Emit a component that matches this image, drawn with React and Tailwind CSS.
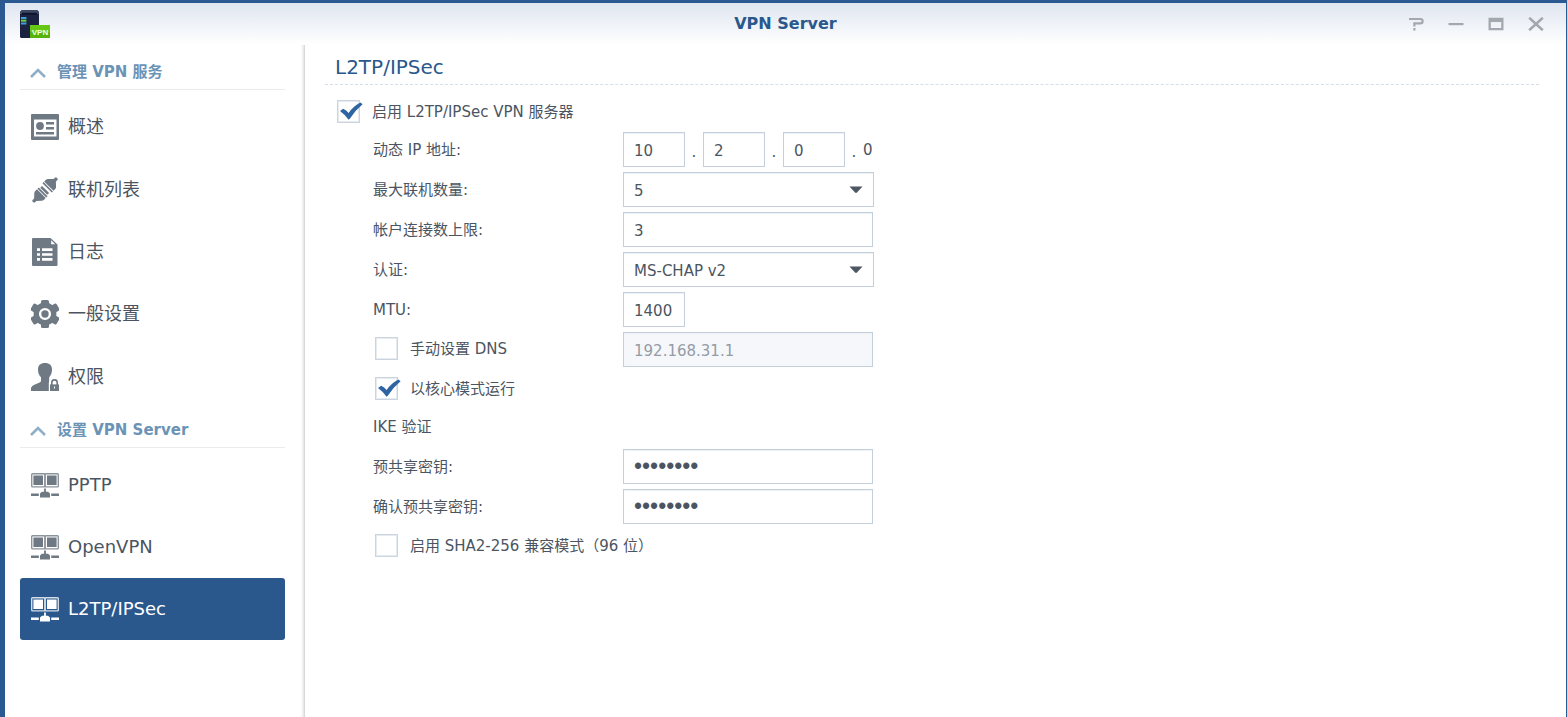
import { useState } from 'react'

function OverviewIcon() {
  return (
    <svg width="28" height="26" viewBox="0 0 28 26" fill="currentColor" aria-hidden="true">
      <path fillRule="evenodd" d="M1 0h26a1 1 0 0 1 1 1v24a1 1 0 0 1-1 1H1a1 1 0 0 1-1-1V1a1 1 0 0 1 1-1zM3 5.5v17h22.5v-17z" />
      <circle cx="9" cy="12" r="3.9" />
      <path d="M15 8h8v2.4h-8zM15 13h8v2.4h-8zM5 18h18v2.4H5z" />
    </svg>
  )
}

function ConnectionIcon() {
  return (
    <svg width="28" height="28" viewBox="0 0 28 28" fill="currentColor" aria-hidden="true">
      <g transform="translate(14 14) rotate(-45)">
        <rect x="-17" y="-1.7" width="4" height="3.4" rx="1.2" />
        <path d="M-14-1.4L-10-5.2Q-9-6.2-7.6-6.2H-5.2V6.2H-7.6Q-9 6.2-10 5.2L-14 1.4z" />
        <path d="M-4.4-6.2h1.8V6.2h-1.8zM-1.8-5h2.6V5h-2.6z" />
        <path d="M3-6.6h1.6V6.6H3z" />
        <path d="M5.4-6.6H7.6Q9-6.6 10-5.6L14-1.4V1.4L10 5.6Q9 6.6 7.6 6.6H5.4z" />
        <rect x="13" y="-1.7" width="4" height="3.4" rx="1.2" />
      </g>
    </svg>
  )
}

function LogIcon() {
  return (
    <svg width="28" height="28" viewBox="0 0 28 28" fill="currentColor" aria-hidden="true">
      <path d="M2 0h17.5L26.5 6.5V27a1 1 0 0 1-1 1H2a1 1 0 0 1-1-1V1a1 1 0 0 1 1-1z" />
      <path d="M20.2 2.2V6.2H24.2z" fill="#fff" />
      <path d="M6 10.3h3v2.6H6zM11 10.3h10.5v2.6H11zM6 15.2h3v2.6H6zM11 15.2h10.5v2.6H11zM6 20.1h3v2.6H6zM11 20.1h10.5v2.6H11z" fill="#fff" />
    </svg>
  )
}

function GearIcon() {
  return (
    <svg width="28" height="28" viewBox="0 0 28 28" fill="currentColor" aria-hidden="true">
      <circle cx="14" cy="14" r="11.4" />
      <rect x="10" y="0" width="8" height="28" rx="1.6" />
      <rect x="10" y="-1" width="8" height="30" rx="1.6" transform="rotate(60 14 14)" />
      <rect x="10" y="-1" width="8" height="30" rx="1.6" transform="rotate(120 14 14)" />
      <circle cx="14" cy="14" r="4.9" fill="currentColor" stroke="#fff" strokeWidth="2.4" />
    </svg>
  )
}

function PrivilegeIcon() {
  return (
    <svg width="28" height="28" viewBox="0 0 28 28" fill="currentColor" aria-hidden="true">
      <path d="M14 0C18.6 0 21 2.4 21 6.4C21 10.4 19.6 12.6 18.2 14.2V16.4L17.8 20.6V28H0V25.6C0 23.4 1.6 22.4 4 21.4L8.6 19.4C9.8 18.8 10 18.4 10 17.4V14.2C8.4 12.6 7 10.4 7 6.4C7 2.4 9.4 0 14 0z" />
      <path d="M19 21.4h9V28h-9z" />
      <path d="M20.8 22v-2.4a2.7 2.7 0 0 1 5.4 0V22" fill="none" stroke="currentColor" strokeWidth="1.6" />
      <path d="M23 23.6h1v2h-1z" fill="#fff" />
    </svg>
  )
}

function NetworkIcon() {
  return (
    <svg width="28" height="25" viewBox="0 0 28 25" fill="currentColor" aria-hidden="true">
      <g fill="none" stroke="currentColor" strokeWidth="1.4" opacity="0.8">
        <rect x="0.7" y="0.7" width="13.2" height="13.2" rx="0.8" />
        <rect x="14.1" y="0.7" width="13.2" height="13.2" rx="0.8" />
      </g>
      <path d="M2.4 2.4h9.6v9.6H2.4zM16 2.4h9.6v9.6H16z" />
      <path d="M13.1 15.6h1.8v3.2h2.2l1.9 1.6v4H9v-4l1.9-1.6h2.2z" />
      <path d="M0 20.4h7.8v2.6H0zM20.2 20.4H28v2.6h-7.8z" />
    </svg>
  )
}

function AppLogo() {
  return (
    <svg width="30" height="30" viewBox="0 0 30 30" aria-hidden="true" className="-ml-[7px]">
      <path d="M2 1h15l2 2v26H1l-1-1V3z" fill="#1c2340" />
      <path d="M2 1h15l2 2v2H0V3z" fill="#3b4763" />
      <path d="M2 3.8h15v1.8H2z" fill="#0d1228" />
      <path d="M1 8h5.4v2H1zM1 13.4h5.4v2H1z" fill="#3f9fd6" />
      <path d="M1 10.7h5.4v2H1z" fill="#6fd43c" />
      <rect x="10" y="16" width="20" height="13" fill="#55b30c" />
      <rect x="10" y="16" width="20" height="7" fill="#66c714" />
      <text x="20" y="25.8" fontSize="8" fontWeight="700" fontFamily="'Liberation Sans', sans-serif" textAnchor="middle" fill="#f2ffe6">VPN</text>
    </svg>
  )
}

const GROUPS = [
  {
    title: '管理 VPN 服务',
    listHeight: 'h-[312px]',
    items: [
      { label: '概述', Icon: OverviewIcon },
      { label: '联机列表', Icon: ConnectionIcon },
      { label: '日志', Icon: LogIcon },
      { label: '一般设置', Icon: GearIcon },
      { label: '权限', Icon: PrivilegeIcon },
    ],
  },
  {
    title: '设置 VPN Server',
    listHeight: 'h-[186px]',
    items: [
      { label: 'PPTP', Icon: NetworkIcon },
      { label: 'OpenVPN', Icon: NetworkIcon },
      { label: 'L2TP/IPSec', Icon: NetworkIcon },
    ],
  },
]

const FIELD = 'h-[35px] border border-[#c3cfdc] bg-white px-[10px] text-[#4b5561] shadow-[inset_0_1px_1px_#eef1f4] outline-none disabled:bg-[#f5f7fa] disabled:text-[#949ca6]'
const TEXT_FIELD = `${FIELD} pt-[2px] text-[15px]`
// larger face so the mask dots come out bold and evenly set
const PASSWORD_FIELD = `${FIELD} w-[250px] font-['Liberation_Sans',sans-serif] text-[23px]`

function Sidebar({ active, onSelect }) {
  return (
    <nav className="w-[300px] shrink-0 border-r border-[#d6d8da] pl-[15px] pr-[19px] pt-[5px] shadow-[inset_-4px_0_3px_-3px_#dcdcdc]">
      {GROUPS.map((group) => (
        <section key={group.title}>
          <h2 className="border-b border-[#e9ebed]">
            <button className="flex h-[39px] w-full items-center gap-[11px] pl-[10px] pt-1 text-[15px] font-bold leading-5 text-[#6b93b6]">
              <svg width="16" height="10" viewBox="0 0 16 10" fill="none" stroke="#8fafc8" strokeWidth="2.6" className="mt-[2px]" aria-hidden="true">
                <path d="M1 9L8 2L15 9" />
              </svg>
              {group.title}
            </button>
          </h2>
          <ul className={`mt-[6px] flex flex-col ${group.listHeight}`}>
            {group.items.map(({ label, Icon }) => (
              <li key={label} className="flex-1">
                <button
                  onClick={() => onSelect(label)}
                  className={`flex h-full w-full items-center gap-[9px] rounded-[3px] pl-[11px] text-[18px] leading-6 ${active === label ? 'bg-[#2a588c] text-white' : 'text-[#6f7983]'}`}
                >
                  <Icon />
                  <span className={active === label ? 'text-white' : 'text-[#4b5561]'}>{label}</span>
                </button>
              </li>
            ))}
          </ul>
        </section>
      ))}
    </nav>
  )
}

function Checkbox({ id, checked, onChange, children }) {
  return (
    <div className="flex items-center gap-3">
      <span className="relative flex">
        <input
          id={id}
          type="checkbox"
          checked={checked}
          onChange={(e) => onChange(e.target.checked)}
          className="h-[23px] w-[23px] appearance-none border border-[#ccd5df] bg-white shadow-[inset_0_0_0_1px_#e6ebf0]"
        />
        {checked && (
          <svg width="26" height="23" viewBox="0 0 26 23" className="pointer-events-none absolute left-0 top-0" aria-hidden="true">
            <path d="M3 11L6.2 8.8Q9.4 10.4 11.6 13Q16 6.6 23.4 2.6L25.6 4.2Q18 10.4 13 18.6L11.6 19.8Q8 14.6 3 11z" fill="#2f64a3" />
          </svg>
        )}
      </span>
      <label htmlFor={id}>{children}</label>
    </div>
  )
}

function Row({ label, htmlFor, children }) {
  return (
    <div className="flex h-[35px] items-center">
      <label htmlFor={htmlFor} className="w-[250px] shrink-0">{label}</label>
      {children}
    </div>
  )
}

function Select({ id, options, defaultValue }) {
  return (
    <div className="relative flex w-[251px] items-center">
      <select id={id} defaultValue={defaultValue} className={`w-full appearance-none ${TEXT_FIELD}`}>
        {options.map((o) => <option key={o}>{o}</option>)}
      </select>
      <svg width="14" height="8" viewBox="0 0 14 8" className="pointer-events-none absolute right-[11px]" aria-hidden="true">
        <path d="M0.5 0.5h13L8 6.6Q7 7.4 6 6.6z" fill="#4d5763" />
      </svg>
    </div>
  )
}

function L2tpForm() {
  const [enabled, setEnabled] = useState(true)
  const [manualDns, setManualDns] = useState(false)
  const [kernelMode, setKernelMode] = useState(true)
  const [sha256, setSha256] = useState(false)

  return (
    <form className="pl-3 pt-[9px]">
      <div className="flex h-[35px] items-center">
        <Checkbox id="enable" checked={enabled} onChange={setEnabled}>启用 L2TP/IPSec VPN 服务器</Checkbox>
      </div>

      <div className="mt-[3px] flex flex-col gap-[5px] pl-9">
        <Row label="动态 IP 地址:" htmlFor="ip-1">
          {['10', '2', '0'].map((octet, i) => (
            <div key={i} className="flex items-center">
              <input id={`ip-${i + 1}`} aria-label={`IP ${i + 1}`} defaultValue={octet} className={`w-[62px] ${TEXT_FIELD}`} />
              <span className="w-[18px] pt-1 text-center">.</span>
            </div>
          ))}
          <span>0</span>
        </Row>
        <Row label="最大联机数量:" htmlFor="max-conn">
          <Select id="max-conn" options={['5', '10', '15', '20']} defaultValue="5" />
        </Row>
        <Row label="帐户连接数上限:" htmlFor="max-account">
          <input id="max-account" defaultValue="3" className={`w-[250px] ${TEXT_FIELD}`} />
        </Row>
        <Row label="认证:" htmlFor="auth">
          <Select id="auth" options={['PAP', 'MS-CHAP v2']} defaultValue="MS-CHAP v2" />
        </Row>
        <Row label="MTU:" htmlFor="mtu">
          <input id="mtu" defaultValue="1400" className={`w-[62px] ${TEXT_FIELD}`} />
        </Row>
        <div className="flex h-[35px] items-center">
          <div className="w-[250px] shrink-0 pb-[2px] pl-[2px]">
            <Checkbox id="dns" checked={manualDns} onChange={setManualDns}>手动设置 DNS</Checkbox>
          </div>
          <input aria-label="DNS" disabled={!manualDns} defaultValue="192.168.31.1" className={`w-[250px] ${TEXT_FIELD}`} />
        </div>
        <div className="flex h-[35px] items-center pb-[2px] pl-[2px]">
          <Checkbox id="kernel" checked={kernelMode} onChange={setKernelMode}>以核心模式运行</Checkbox>
        </div>
      </div>

      <fieldset className="mt-[2px] flex flex-col gap-[5px] pl-9">
        <div className="flex h-[35px] items-center">IKE 验证</div>
        <Row label="预共享密钥:" htmlFor="psk">
          <input id="psk" type="password" defaultValue="password" className={PASSWORD_FIELD} />
        </Row>
        <Row label="确认预共享密钥:" htmlFor="psk-confirm">
          <input id="psk-confirm" type="password" defaultValue="password" className={PASSWORD_FIELD} />
        </Row>
        <div className="flex h-[35px] items-center pb-[2px] pl-[2px]">
          <Checkbox id="sha" checked={sha256} onChange={setSha256}>启用 SHA2-256 兼容模式（96 位）</Checkbox>
        </div>
      </fieldset>
    </form>
  )
}

export default function App() {
  const [active, setActive] = useState('L2TP/IPSec')

  return (
    <div className="flex min-h-screen bg-[#2b5a93] pl-[5px] pr-px pt-[3px] font-['DejaVu_Sans','Noto_Sans_CJK_SC',sans-serif] text-[15px] leading-5 text-[#4b5561]">
      <div className="flex flex-1 flex-col bg-white">
        {/* Title bar */}
        <header className="grid h-[42px] shrink-0 grid-cols-[1fr_auto_1fr] items-center bg-linear-to-b from-[#dfe6f0] to-white px-[22px]">
          <AppLogo />
          <h1 className="text-[16px] font-bold text-[#2a588c]">VPN Server</h1>
          <div className="flex justify-end gap-6 text-[#a3a8b0]">
            <button aria-label="Help">
              <svg width="16" height="14" viewBox="0 0 16 14" fill="none" stroke="currentColor" strokeWidth="2.2" aria-hidden="true">
                <path d="M1 2h11.4q2.2 0 2.2 2.2t-2.2 2.2H6.4V9.4M6.4 11v2.4" />
              </svg>
            </button>
            <button aria-label="Minimize">
              <svg width="16" height="14" viewBox="0 0 16 14" fill="currentColor" aria-hidden="true">
                <path d="M0.5 6h15v2.2h-15z" />
              </svg>
            </button>
            <button aria-label="Maximize">
              <svg width="16" height="14" viewBox="0 0 16 14" fill="currentColor" aria-hidden="true">
                <path fillRule="evenodd" d="M0.5 0.8h15v12.4h-15zM2.8 5v6h10.4V5z" />
              </svg>
            </button>
            <button aria-label="Close">
              <svg width="16" height="14" viewBox="0 0 16 14" fill="none" stroke="currentColor" strokeWidth="2.6" aria-hidden="true">
                <path d="M1.2 0.8L14.8 13.2M14.8 0.8L1.2 13.2" />
              </svg>
            </button>
          </div>
        </header>

        <div className="flex flex-1">
          <Sidebar active={active} onSelect={setActive} />
          <main className="min-w-0 flex-1 pl-5 pr-[27px]">
            <h2 className="flex h-10 items-center border-b border-dashed border-[#d5deea] pl-[10px] pt-1 text-[20px] leading-6 text-[#2a588c]">L2TP/IPSec</h2>
            <L2tpForm />
          </main>
        </div>
      </div>
    </div>
  )
}
